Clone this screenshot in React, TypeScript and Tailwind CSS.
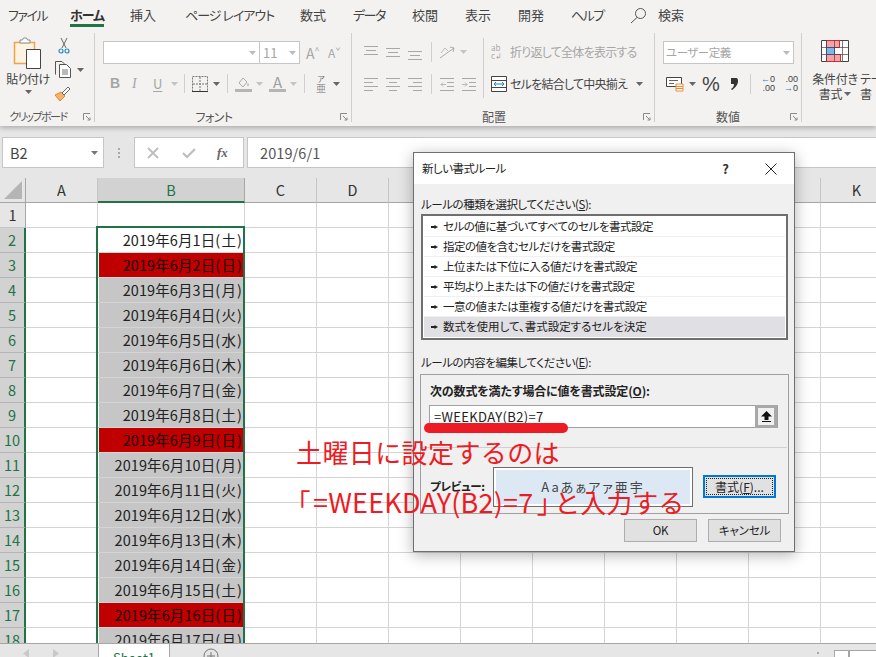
import React from 'react';

const tabs = [
  { label: 'ファイル', w: 'w-[70px]', pl: 'pl-2', tr: 'tracking-[-1.5px]' },
  { label: 'ホーム', w: 'w-[60px]', pl: 'pl-0', tr: 'tracking-[-1px]' },
  { label: '挿入', w: 'w-[55px]', pl: 'pl-0', tr: '' },
  { label: 'ページ レイアウト', w: 'w-[115px]', pl: 'pl-0', tr: 'tracking-[-1px]' },
  { label: '数式', w: 'w-[53px]', pl: 'pl-0', tr: '' },
  { label: 'データ', w: 'w-[59px]', pl: 'pl-0', tr: 'tracking-[-1.5px]' },
  { label: '校閲', w: 'w-[53px]', pl: 'pl-0', tr: '' },
  { label: '表示', w: 'w-[53px]', pl: 'pl-0', tr: '' },
  { label: '開発', w: 'w-[53px]', pl: 'pl-0', tr: '' },
  { label: 'ヘルプ', w: 'w-[61px]', pl: 'pl-0', tr: 'tracking-[-1.5px]' },
];

const weekdays = ['土', '日', '月', '火', '水', '木', '金'];
const columns = ['C', 'D', 'E', 'F', 'G', 'H', 'I', 'J', 'K'];
const rules = [
  'セルの値に基づいてすべてのセルを書式設定',
  '指定の値を含むセルだけを書式設定',
  '上位または下位に入る値だけを書式設定',
  '平均より上または下の値だけを書式設定',
  '一意の値または重複する値だけを書式設定',
  '数式を使用して、書式設定するセルを決定',
];

const gridCols = 'grid grid-cols-[26px_72px_147px_repeat(9,72px)]';

const Caret = ({ className = '' }: { className?: string }) => (
  <svg width="7" height="4" viewBox="0 0 7 4" className={`shrink-0 ${className}`}>
    <path d="M0 0h7L3.5 4z" fill="currentColor" />
  </svg>
);

const VSep = ({ className = '' }: { className?: string }) => (
  <div className={`w-px bg-[#d0cfce] shrink-0 ${className}`} />
);

const Launcher = () => (
  <svg width="8" height="8" viewBox="0 0 8 8" className="shrink-0">
    <path d="M.5 7V.5H7" fill="none" stroke="#8a8a8a" />
    <path d="M3 3l4 4M7 4.5V7H4.5" fill="none" stroke="#8a8a8a" />
  </svg>
);

// horizontal text-alignment style icon, each line is [x1, x2, y]
const Lines = ({ lines, color = '#a8a8a8' }: { lines: number[][]; color?: string }) => (
  <svg width="15" height="15" viewBox="0 0 15 15" className="shrink-0">
    {lines.map((l, i) => (
      <path key={i} d={`M${l[0]} ${l[2]}.5H${l[1]}`} stroke={color} fill="none" />
    ))}
  </svg>
);

const IndentIcon = ({ flip = false }: { flip?: boolean }) => (
  <svg width="15" height="15" viewBox="0 0 15 15" className="shrink-0">
    <path d="M0 1.500h14M7 5.500h7M7 9.500h7M0 13.500h14" stroke="#a8a8a8" fill="none" />
    <path d={flip ? 'M0 7.500h5M3 5.500l2 2-2 2' : 'M1 7.500h5M3 5.500l-2 2 2 2'} stroke="#b8b8b8" fill="none" />
  </svg>
);

const Group = ({ w, label, labelClass = '', children }: { w: string; label: string; labelClass?: string; children: React.ReactNode }) => (
  <div className={`${w} shrink-0 h-full flex flex-col relative`}>
    <div className="flex-1 min-h-0">{children}</div>
    <div className="h-[19px] flex items-center justify-between pr-[3px] shrink-0">
      <div className={`flex-1 text-center leading-none text-[#555] whitespace-nowrap ${labelClass}`}>{label}</div>
      <Launcher />
    </div>
  </div>
);

const ClipboardGroup = () => (
  <Group w="w-[94px]" label="クリップボード" labelClass="pr-[7px] text-[11px] tracking-[-1.5px]">
    <div className="flex pt-[4px]">
      <div className="w-[54px] flex flex-col items-center pl-[2px]">
        <svg width="30" height="32" viewBox="0 0 30 32">
          <path d="M1.5 5.5h20v21h-20z" fill="#fdf3e2" stroke="#f0a44a" strokeWidth="1.5" />
          <path d="M7 5V3h2.5l1-2h3l1 2H17v3H7z" fill="#fff" stroke="#8c8c8c" />
          <path d="M13.5 12.5h14v19h-14z" fill="#fff" stroke="#444" />
        </svg>
        <div className="mt-[2px] text-[12px] tracking-[-0.5px] leading-[16px] text-[#444] whitespace-nowrap">貼り付け</div>
        <Caret className="mt-[3px] text-[#666]" />
      </div>
      <div className="flex flex-col items-start">
        <svg width="12" height="17" viewBox="0 0 12 17" className="ml-[4px]">
          <path d="M3 1l5 10M9 1L4 11" stroke="#666" fill="none" />
          <circle cx="3" cy="14" r="2" fill="none" stroke="#2a8ad4" strokeWidth="1.2" />
          <circle cx="9" cy="14" r="2" fill="none" stroke="#2a8ad4" strokeWidth="1.2" />
        </svg>
        <div className="flex items-center mt-[7px]">
          <svg width="18" height="17" viewBox="0 0 18 17">
            <path d="M1.5 13.5V.5H8l2 2v1" fill="none" stroke="#555" />
            <path d="M5.5 3.5h7l4 4v9h-11z" fill="#fff" stroke="#555" />
            <path d="M8 9h6M8 11h6M8 13h6" stroke="#777" />
          </svg>
          <Caret className="ml-[5px] text-[#666]" />
        </div>
        <svg width="17" height="17" viewBox="0 0 17 17" className="mt-[7px]">
          <path d="M1 10l5 6 5-5-4-4z" fill="#f5b26b" stroke="#e8872a" />
          <path d="M8 8l6-6 2 2-6 6z" fill="#fff" stroke="#666" />
        </svg>
      </div>
    </div>
  </Group>
);

const FontGroup = () => (
  <Group w="w-[256px]" label="フォント" labelClass="pr-[7px] text-[12px] tracking-[-0.5px]">
    <div className="pt-[8px] pl-[8px]">
      <div className="flex items-center h-[23px]">
        <div className="w-[157px] h-full bg-white border border-[#c6c6c6] flex items-center justify-end pr-[3px]">
          <Caret className="text-[#bbb]" />
        </div>
        <div className="w-[40px] h-full bg-white border border-l-0 border-[#c6c6c6] flex items-center justify-between px-[3px] text-[13px] text-[#a6a6a6]">
          11
          <Caret className="text-[#bbb]" />
        </div>
        <div className="ml-[6px] w-[16px] text-[14px] text-[#a6a6a6] leading-none">A<span className="text-[9px] align-top">^</span></div>
        <div className="ml-[6px] w-[16px] text-[12px] text-[#a6a6a6] leading-none">A<span className="text-[9px] align-top">ˇ</span></div>
      </div>
      <div className="flex items-center h-[23px] mt-[8px] text-[#a6a6a6]">
        <span className="ml-[7px] w-[19px] text-[14px] font-bold font-['Liberation_Sans',sans-serif]">B</span>
        <span className="w-[21px] pl-[3px] text-[14px] italic font-['Liberation_Serif',serif]">I</span>
        <span className="w-[21px] pl-[3px] text-[13px] underline underline-offset-2">U</span>
        <Caret className="text-[#c4c4c4]" />
        <VSep className="h-[19px] ml-[6px]" />
        <svg width="16" height="16" viewBox="0 0 16 16" className="ml-[7px] shrink-0">
          <path d="M.5.5h15v15H.5z" fill="none" stroke="#777" strokeDasharray="2 1" />
          <path d="M8 1v14M1 8h14" stroke="#777" strokeDasharray="2 1" />
          <path d="M0 15.5h16" stroke="#333" />
        </svg>
        <Caret className="ml-[5px] text-[#666]" />
        <VSep className="h-[19px] ml-[7px]" />
        <svg width="17" height="17" viewBox="0 0 17 17" className="ml-[7px] shrink-0">
          <path d="M4 8l4-5 4 4-4 5z" fill="none" stroke="#aaa" />
          <path d="M13 8c1 1.500 1 3 0 3s-1-1.500 0-3z" fill="#aaa" />
          <path d="M0 14h17v3H0z" fill="#b5b5b5" />
        </svg>
        <Caret className="ml-[4px] text-[#c4c4c4]" />
        <div className="ml-[6px] w-[17px] h-[17px] flex flex-col items-center justify-end shrink-0">
          <span className="text-[15px] leading-[14px] text-[#a0a0a0]">A</span>
          <span className="w-full h-[3px] bg-[#b5b5b5]" />
        </div>
        <Caret className="ml-[4px] text-[#c4c4c4]" />
        <VSep className="h-[19px] ml-[7px]" />
        <div className="ml-[11px] w-[10px] flex flex-col items-center leading-none shrink-0">
          <span className="text-[8px] text-[#777]">ア</span>
          <span className="text-[10px] text-[#999]">亜</span>
        </div>
        <Caret className="ml-[7px] text-[#666]" />
      </div>
    </div>
  </Group>
);

const AlignGroup = () => (
  <Group w="w-[302px]" label="配置" labelClass="pr-[7px] text-[12px]">
    <div className="flex pt-[6px] pl-[12px] h-[74px]">
      <div className="w-[119px] shrink-0 flex flex-col">
        <div className="flex items-center h-[26px]">
          <div className="flex gap-[7px]">
            <Lines lines={[[0, 14, 1], [2, 12, 5], [0, 14, 9]]} />
            <Lines lines={[[0, 14, 3], [2, 12, 7], [0, 14, 11]]} />
            <Lines lines={[[0, 14, 6], [2, 12, 10], [0, 14, 14]]} />
          </div>
          <VSep className="h-[20px] ml-[8px]" />
          <svg width="18" height="15" viewBox="0 0 18 15" className="ml-[7px] shrink-0">
            <path d="M1 13L15 3M11 2l4 1-1 4" fill="none" stroke="#aaa" />
            <path d="M2 8l4-5 3 3" fill="none" stroke="#bbb" />
          </svg>
          <Caret className="ml-[3px] text-[#c4c4c4]" />
        </div>
        <div className="flex items-center h-[26px] mt-[6px]">
          <div className="flex gap-[7px]">
            <Lines lines={[[0, 14, 1], [0, 9, 5], [0, 14, 9], [0, 9, 13]]} />
            <Lines lines={[[0, 14, 1], [3, 11, 5], [0, 14, 9], [3, 11, 13]]} />
            <Lines lines={[[0, 14, 1], [5, 14, 5], [0, 14, 9], [5, 14, 13]]} />
          </div>
          <VSep className="h-[20px] ml-[8px]" />
          <div className="flex gap-[7px] ml-[8px]">
            <IndentIcon />
            <IndentIcon flip />
          </div>
        </div>
      </div>
      <VSep className="h-[60px] mt-[-1px]" />
      <div className="flex flex-col pl-[7px]">
        <div className="flex items-center h-[26px]">
          <div className="w-[16px] text-[8px] leading-[8px] text-[#aaa]">ab<br />c↲</div>
          <span className="ml-[3px] text-[12px] tracking-[-0.75px] text-[#a6a6a6] whitespace-nowrap">折り返して全体を表示する</span>
        </div>
        <div className="flex items-center h-[26px] mt-[6px]">
          <svg width="16" height="16" viewBox="0 0 16 16" className="shrink-0">
            <path d="M.5.5h15v15H.5z" fill="#fff" stroke="#444" />
            <path d="M1 4.500h14M1 11.500h14" stroke="#444" />
            <path d="M3 8h10M5 6L3 8l2 2M11 6l2 2-2 2" fill="none" stroke="#1e7fd0" />
          </svg>
          <span className="ml-[3px] text-[12px] tracking-[-0.75px] text-[#444] whitespace-nowrap">セルを結合して中央揃え</span>
          <Caret className="ml-[9px] text-[#666]" />
        </div>
      </div>
    </div>
  </Group>
);

const NumberGroup = () => (
  <Group w="w-[146px]" label="数値" labelClass="pl-[11px] text-[12px]">
    <div className="pt-[8px] pl-[8px]">
      <div className="w-[131px] h-[23px] bg-white border border-[#c6c6c6] flex items-center justify-between pl-[2px] pr-[3px] text-[11.5px] tracking-[-0.5px] text-[#a6a6a6]">
        ユーザー定義
        <Caret className="text-[#bbb]" />
      </div>
      <div className="flex items-center h-[23px] mt-[8px]">
        <svg width="18" height="17" viewBox="0 0 18 17" className="ml-[3px] shrink-0">
          <path d="M.5 2.500h15v9H.5z" fill="#fff" stroke="#444" />
          <path d="M3 5.500h9M3 8.500h5" stroke="#666" />
          <path d="M10 9h7v7h-7z" fill="#fff" stroke="#ee8a33" />
          <path d="M10 11.500h7M10 13.500h7" stroke="#ee8a33" />
        </svg>
        <Caret className="ml-[5px] text-[#666]" />
        <span className="ml-[6px] w-[23px] text-[20px] leading-none text-[#444] font-['Liberation_Sans',sans-serif]">%</span>
        <svg width="8" height="12" viewBox="0 0 8 12" className="ml-[5px] mr-[5px] shrink-0">
          <path d="M1 0h5c2 0 2 2 2 3 0 4-3 7-6 9l-1-1c2-1 3-3 3-5H1z" fill="#333" />
        </svg>
        <VSep className="h-[20px] ml-[7px]" />
        <div className="ml-[7px] w-[17px] text-[9px] leading-[9px] text-[#444] text-right font-['Liberation_Sans',sans-serif] shrink-0">
          <span className="text-[#1e7fd0]">←</span>0<br />.00
        </div>
        <div className="ml-[6px] w-[17px] text-[9px] leading-[9px] text-[#444] text-right font-['Liberation_Sans',sans-serif] shrink-0">
          .00<br /><span className="text-[#1e7fd0]">→</span>0
        </div>
      </div>
    </div>
  </Group>
);

const StylesGroup = () => (
  <div className="flex-1 h-full flex pl-[8px] pt-[7px] whitespace-nowrap text-[12px] tracking-[-0.2px] leading-[15px] text-[#444]">
    <div className="w-[50px] flex flex-col items-center shrink-0">
      <svg width="28" height="22" viewBox="0 0 28 22">
        <path d="M.5.5h27v21H.5z" fill="#fff" stroke="#444" />
        <path d="M5.500.5h13v7h-13zM5.500 14.500h14v7h-14z" fill="#f9a0a8" stroke="#d92b2b" />
        <path d="M5.500 7.500h8v7h-8z" fill="#7fb8e8" stroke="#1e7fd0" />
        <path d="M5.500 0v22M13.500 0v22M21.500 0v22M0 7.500h28M0 14.500h28" stroke="#444" fill="none" opacity=".7" />
      </svg>
      <div className="mt-[9px]">条件付き</div>
      <div className="flex items-center">書式<Caret className="ml-[2px] text-[#666]" /></div>
    </div>
    <div className="flex flex-col">
      <div className="h-[22px]" />
      <div className="mt-[9px]">テー</div>
      <div>書</div>
    </div>
  </div>
);

const Ribbon = () => (
  <div className="relative z-10 h-[126px] bg-[#f3f2f1] shadow-[0_2px_5px_rgba(0,0,0,0.25)]">
    <div className="flex items-start h-[33px] pt-[6px] text-[13px] leading-[18px] text-[#444]">
      {tabs.map((t) => (
        <div key={t.label} className={`${t.w} ${t.pl} ${t.tr} shrink-0 whitespace-nowrap`}>
          {t.label === 'ホーム' ? (
            <span className="inline-block font-bold text-[#333] border-b-[3px] border-[#217346] h-[21px]">{t.label}</span>
          ) : (
            t.label
          )}
        </div>
      ))}
      <svg width="17" height="17" viewBox="0 0 17 17" className="ml-[-2px] mt-[1px] shrink-0">
        <circle cx="10.500" cy="6.500" r="5" fill="none" stroke="#555" />
        <path d="M7 10.500L1 16" stroke="#555" />
      </svg>
      <span className="ml-[11px]">検索</span>
    </div>
    <div className="flex h-[93px]">
      <ClipboardGroup />
      <VSep className="h-[89px] bg-[#c8c8c8]" />
      <FontGroup />
      <VSep className="h-[89px] bg-[#c8c8c8]" />
      <AlignGroup />
      <VSep className="h-[89px] bg-[#c8c8c8]" />
      <NumberGroup />
      <VSep className="h-[89px] bg-[#c8c8c8]" />
      <StylesGroup />
    </div>
  </div>
);

const FormulaBar = () => (
  <div className="h-[52px] bg-[#e6e6e6] flex items-start pt-[11px] pl-[2px]">
    <div className="w-[102px] h-[31px] bg-white border border-[#c6c6c6] flex items-center justify-between pl-[7px] pr-[5px] text-[14.5px] text-[#444]">
      B2
      <Caret className="text-[#777]" />
    </div>
    <div className="w-[30px] h-[31px] flex flex-col items-center justify-center gap-[2px]">
      <span className="w-[2px] h-[2px] bg-[#aaa]" />
      <span className="w-[2px] h-[2px] bg-[#aaa]" />
      <span className="w-[2px] h-[2px] bg-[#aaa]" />
    </div>
    <div className="w-[110px] h-[31px] bg-white border border-[#c6c6c6] flex items-center">
      <svg width="12" height="12" viewBox="0 0 12 12" className="ml-[12px]">
        <path d="M1 1l10 10M11 1L1 11" stroke="#bdbdbd" strokeWidth="1.8" />
      </svg>
      <svg width="14" height="12" viewBox="0 0 14 12" className="ml-[23px]">
        <path d="M1 6l4 4 8-8" fill="none" stroke="#bdbdbd" strokeWidth="2.200" />
      </svg>
      <span className="ml-[21px] text-[13px] italic font-bold text-[#666] font-['Liberation_Serif',serif]">fx</span>
    </div>
    <div className="ml-[3px] flex-1 h-[31px] bg-white border border-r-0 border-[#c6c6c6] flex items-center pl-[12px] text-[14.5px] tracking-[0.1px] text-[#555]">
      2019/6/1
    </div>
  </div>
);

const Sheet = () => {
  const rows = Array.from({ length: 18 }, (_, i) => i + 1);
  return (
    <div className="relative flex-1 min-h-0 overflow-hidden bg-white text-[14.5px]">
      <div className={`${gridCols} h-[25px] bg-[#e6e6e6] text-[#333]`}>
        <div className="border-r border-b border-[#a6a6a6] flex items-end justify-end pr-[3px] pb-[3px]">
          <svg width="18" height="18" viewBox="0 0 18 18"><path d="M18 0v18H0z" fill="#b5b5b5" /></svg>
        </div>
        <div className="border-b border-r border-b-[#a6a6a6] border-r-[#c6c6c6] flex items-center justify-center">A</div>
        <div className="bg-[#d2d2d2] border-b-2 border-r border-b-[#217346] border-r-[#a6a6a6] flex items-center justify-center text-[#217346]">B</div>
        {columns.map((c) => (
          <div key={c} className="border-b border-r border-b-[#a6a6a6] border-r-[#c6c6c6] flex items-center justify-center">{c}</div>
        ))}
      </div>
      {rows.map((r) => {
        const selected = r > 1;
        const day = r - 1;
        const wd = weekdays[(day - 1) % 7];
        const fill = day === 1 ? 'text-[#222]' : wd === '日' ? 'bg-[#c00000] text-[#1a0000]' : 'bg-[#c6c6c6] text-[#222]';
        return (
          <div key={r} className={`${gridCols} h-[25px]`}>
            <div className={`flex items-center justify-center border-b ${selected ? 'bg-[#d2d2d2] text-[#217346] border-r-2 border-r-[#217346] border-b-[#b4b4b4]' : 'bg-[#e6e6e6] text-[#333] border-r border-r-[#a6a6a6] border-b-[#c6c6c6]'}`}>
              {r}
            </div>
            <div className="border-r border-b border-[#d4d4d4]" />
            <div className="border-r border-b border-[#d4d4d4] pl-[1px] pr-[1px]">
              {selected ? (
                <div className={`h-full flex items-center justify-end pr-[1px] whitespace-nowrap tracking-[0.1px] [font-feature-settings:normal] ${fill}`}>
                  2019年6月{day}日(<span className="px-[1px]">{wd}</span>)
                </div>
              ) : null}
            </div>
            {columns.map((c) => (
              <div key={c} className="border-r border-b border-[#d4d4d4]" />
            ))}
          </div>
        );
      })}
      {/* selection frame over the cells */}
      <div className="absolute left-[96px] top-[48px] w-[149px] h-[460px] border-2 border-[#217346]" />
    </div>
  );
};

const TabBar = () => (
  <div className="h-[14px] shrink-0 bg-[#e6e6e6] border-t border-[#a6a6a6] flex items-start overflow-hidden relative z-10">
    <div className="w-[98px] flex shrink-0 pl-[23px] pt-[5px] gap-[24px]">
      <svg width="6" height="9" viewBox="0 0 6 9"><path d="M6 0v9L0 4.500z" fill="#c8c8c8" /></svg>
      <svg width="6" height="9" viewBox="0 0 6 9"><path d="M0 0v9l6-4.500z" fill="#c8c8c8" /></svg>
    </div>
    <div className="w-[72px] h-full shrink-0 bg-white border-x border-[#a6a6a6] text-center text-[13px] leading-[28px] text-[#217346]">Sheet1</div>
    <svg width="16" height="16" viewBox="0 0 16 16" className="ml-[33px] mt-[4px] shrink-0">
      <circle cx="8" cy="8" r="7" fill="none" stroke="#777" />
      <path d="M8 4v8M4 8h8" stroke="#777" />
    </svg>
    <div className="ml-auto flex items-start">
      <span className="w-[2px] h-[2px] bg-[#aaa] mt-[8px] mr-[15px]" />
      <div className="w-[15px] h-[14px] bg-white border-x border-t border-[#a6a6a6] mt-[6px]" />
      <div className="w-[27px] h-[14px] bg-white border-l border-t border-[#a6a6a6] mt-[6px]" />
    </div>
  </div>
);

const DialogButton = ({ children }: { children: React.ReactNode }) => (
  <div className="w-[73px] h-[23px] bg-[#e1e1e1] border border-[#adadad] flex items-center justify-center text-[11.5px] tracking-[-0.2px] text-[#222]">
    {children}
  </div>
);

const Dialog = () => (
  <div className="absolute z-20 left-[413px] top-[152px] w-[382px] h-[400px] bg-[#f0f0f0] border border-[#6f6f6f] shadow-[0_3px_14px_rgba(0,0,0,0.3)] text-[11.5px] text-[#222] flex flex-col">
    <div className="h-[31px] bg-white flex items-center pl-[8px] pr-[17px] shrink-0">
      <span className="flex-1 tracking-[-0.5px]">新しい書式ルール</span>
      <span className="mr-[36px] text-[13px] font-bold text-[#333]">?</span>
      <svg width="12" height="12" viewBox="0 0 12 12"><path d="M.5.5l11 11M11.500.5l-11 11" stroke="#222" fill="none" /></svg>
    </div>
    <div className="px-[7px] pt-[11px] leading-[18px] tracking-[-0.45px]">
      ルールの種類を選択してください(<span className="underline">S</span>):
    </div>
    <div className="mx-[7px] mt-[1px] w-[367px] h-[126px] bg-white border-2 border-[#6f6f6f] p-[1px]">
      {rules.map((rule, i) => (
        <div key={rule} className={`h-[20px] flex items-center pl-[7px] border-b ${i === 5 ? 'bg-[#e0dfe3] border-transparent' : 'border-[#f0f0f0] tracking-[-0.5px]'}`}>
          <svg width="7" height="4" viewBox="0 0 7 4" className="shrink-0 mr-[5px]"><path d="M0 1h3.500V0L7 2 3.500 4V3H0z" fill="#222" /></svg>
          {rule}
        </div>
      ))}
    </div>
    <div className="px-[7px] mt-[13px] leading-[18px] tracking-[-0.45px]">
      ルールの内容を編集してください(<span className="underline">E</span>):
    </div>
    <div className="ml-[6px] mt-[3px] w-[369px] h-[140px] border border-[#a0a0a0] flex flex-col">
      <div className="pl-[9px] pt-[7px] text-[12px] tracking-[-0.15px] font-bold leading-[18px]">
        次の数式を満たす場合に値を書式設定(<span className="underline">O</span>):
      </div>
      <div className="ml-[8px] mt-[5px] w-[349px] h-[23px] bg-white border border-[#a0a0a0] flex items-center justify-between pl-[4px]">
        <span className="text-[13px] tracking-[0.35px]">=WEEKDAY(B2)=7</span>
        <div className="w-[22px] h-[23px] bg-[#f0f0f0] border-[3px] border-[#a8a8a8] flex items-center justify-center">
          <svg width="11" height="11" viewBox="0 0 11 11"><path d="M5.500 0L11 5.500H7.500V9h-4V5.500H0zM1 10h9v1H1z" fill="#111" /></svg>
        </div>
      </div>
      <div className="mt-[19px] h-px bg-[#d0d0d0] mr-[1px]" />
      <div className="flex items-start mt-[19px] pl-[9px]">
        <span className="w-[63px] mt-[10px] font-bold leading-[18px] tracking-[-0.3px]">プレビュー:</span>
        <div className="w-[200px] h-[40px] bg-white border border-[#6f6f6f] p-[2px]">
          <div className="h-full bg-[#dce9f5] flex items-center justify-center text-[13px] tracking-[2px] text-[#444]">Aaあぁアァ亜宇</div>
        </div>
        <div className="ml-[10px] mt-[8px] w-[73px] h-[23px] bg-[#e1e1e1] border-2 border-[#0078d7] p-px">
          <div className="h-full border border-dotted border-[#222] flex items-center justify-center text-[12px] whitespace-nowrap">書式(<span className="underline">F</span>)...</div>
        </div>
      </div>
    </div>
    <div className="flex justify-end gap-[11px] pr-[13px] mt-[5px]">
      <DialogButton>OK</DialogButton>
      <DialogButton>キャンセル</DialogButton>
    </div>
  </div>
);

const Annotation = () => (
  <>
    <div className="absolute z-30 left-[424px] top-[423px] w-[144px] h-[10px] rounded-full bg-[#ed1c24]" />
    <div className="absolute z-30 left-[296px] top-[433px] text-[26px] tracking-[0.4px] leading-[38px] text-[#ed1c24] whitespace-nowrap [font-feature-settings:normal]">
      土曜日に設定するのは
    </div>
    <div className="absolute z-30 left-[297px] top-[483px] flex items-baseline h-[38px] text-[26px] leading-[38px] text-[#ed1c24] whitespace-nowrap">
      <span>「</span>
      <span className="ml-[3px] text-[27px] tracking-[0.2px]">=WEEKDAY(B2)=7</span>
      <span className="ml-[4px]">」</span>
      <span className="ml-[4px] [font-feature-settings:normal]">と入力する</span>
    </div>
  </>
);

export default function App() {
  return (
    <div className="relative w-[876px] h-[657px] overflow-hidden flex flex-col font-['Noto_Sans_CJK_JP','Noto_Sans',sans-serif] [font-feature-settings:'palt']">
      <Ribbon />
      <FormulaBar />
      <Sheet />
      <TabBar />
      <Dialog />
      <Annotation />
    </div>
  );
}
